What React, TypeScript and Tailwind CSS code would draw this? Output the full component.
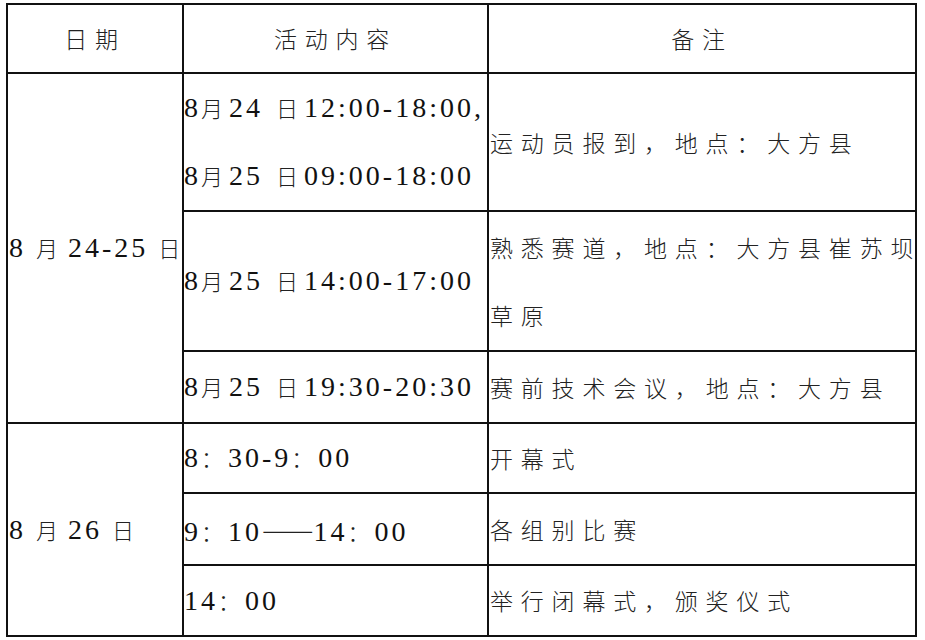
import React from "react";

type Variant = "time" | "note" | "date" | "head";

const cls: Record<Variant, Record<string, string>> = {
  time: {
    latin: "font-['Liberation_Serif'] text-[28px] tracking-[3px] [word-spacing:-10px] text-[#111]",
    yue: "font-['Noto_Sans_CJK_SC'] font-light text-[22px] tracking-[0px] text-[#222] ml-[0px] mr-[6px]",
    ri: "font-['Noto_Sans_CJK_SC'] font-light text-[22px] tracking-[0px] text-[#222] ml-[13px] mr-[6px]",
    han: "font-['Noto_Sans_CJK_SC'] font-light text-[22px] tracking-[0px] text-[#222]",
    punct: "font-['Noto_Sans_CJK_SC'] font-light text-[22px] tracking-[5px] text-[#222]",
    dash: "font-['Noto_Sans_CJK_SC'] font-light text-[31px] tracking-[0px] text-[#222]",
  },
  date: {
    latin: "font-['Liberation_Serif'] text-[28px] tracking-[3px] text-[#111]",
    yue: "font-['Noto_Sans_CJK_SC'] font-light text-[22px] tracking-[0px] text-[#222]",
    ri: "font-['Noto_Sans_CJK_SC'] font-light text-[22px] tracking-[0px] text-[#222]",
    han: "font-['Noto_Sans_CJK_SC'] font-light text-[22px] tracking-[0px] text-[#222]",
    punct: "font-['Noto_Sans_CJK_SC'] font-light text-[22px] tracking-[0px] text-[#222]",
    dash: "font-['Noto_Sans_CJK_SC'] font-light text-[22px] tracking-[0px] text-[#222]",
  },
  note: {
    latin: "font-['Liberation_Serif'] text-[28px] tracking-[3px] text-[#111]",
    yue: "font-['Noto_Sans_CJK_SC'] font-light text-[23px] tracking-[7.8px] text-[#222]",
    ri: "font-['Noto_Sans_CJK_SC'] font-light text-[23px] tracking-[7.8px] text-[#222]",
    han: "font-['Noto_Sans_CJK_SC'] font-light text-[23px] tracking-[7.8px] text-[#222]",
    punct: "font-['Noto_Sans_CJK_SC'] font-light text-[23px] tracking-[7.8px] text-[#222]",
    dash: "font-['Noto_Sans_CJK_SC'] font-light text-[23px] tracking-[7.8px] text-[#222]",
  },
  head: {
    latin: "font-['Liberation_Serif'] text-[28px] tracking-[3px] text-[#111]",
    yue: "font-['Noto_Sans_CJK_SC'] font-light text-[23px] tracking-[7.8px] text-[#222]",
    ri: "font-['Noto_Sans_CJK_SC'] font-light text-[23px] tracking-[7.8px] text-[#222]",
    han: "font-['Noto_Sans_CJK_SC'] font-light text-[23px] tracking-[7.8px] text-[#222]",
    punct: "font-['Noto_Sans_CJK_SC'] font-light text-[23px] tracking-[7.8px] text-[#222]",
    dash: "font-['Noto_Sans_CJK_SC'] font-light text-[23px] tracking-[7.8px] text-[#222]",
  },
};

function kind(ch: string): string {
  const c = ch.charCodeAt(0);
  if (c === 0x2014) return "dash";
  if ((c >= 0x3000 && c <= 0x303f) || (c >= 0xff00 && c <= 0xffef)) return "punct";
  if (ch === "月") return "yue";
  if (ch === "日") return "ri";
  if (c >= 0x4e00 && c <= 0x9fff) return "han";
  return "latin";
}

function Mixed({ text, v }: { text: string; v: Variant }) {
  const out: { k: string; s: string }[] = [];
  for (const ch of text) {
    const k = kind(ch);
    const last = out[out.length - 1];
    if (last && last.k === k && k !== "yue" && k !== "ri") last.s += ch;
    else out.push({ k, s: ch });
  }
  return (
    <span className="whitespace-pre">
      {out.map((r, i) => (
        <span key={i} className={cls[v][r.k]}>
          {r.s}
        </span>
      ))}
    </span>
  );
}

function Lines({ lines, v }: { lines: string[]; v: Variant }) {
  return (
    <div className="flex flex-col">
      {lines.map((l, i) => (
        <div key={i} className="h-[68px] flex items-center whitespace-nowrap">
          <Mixed text={l} v={v} />
        </div>
      ))}
    </div>
  );
}

const td = "border-2 border-[#111] p-0 align-middle font-['Liberation_Serif','Noto_Sans_CJK_SC',serif]";

export default function App() {
  return (
    <div className="w-[925px] h-[640px] bg-white overflow-hidden pl-[6px] pt-[3px]">
      <table className="border-collapse table-fixed w-[909px]">
        <colgroup>
          <col className="w-[176px]" />
          <col className="w-[305px]" />
          <col className="w-[428px]" />
        </colgroup>
        <tbody>
          <tr className="h-[69px]">
            <td className={`${td} text-center`}>
              <Mixed text="日期" v="head" />
            </td>
            <td className={`${td} text-center`}>
              <Mixed text="活动内容" v="head" />
            </td>
            <td className={`${td} text-center`}>
              <Mixed text="备注" v="head" />
            </td>
          </tr>
          <tr className="h-[137px]">
            <td rowSpan={3} className={`${td} pl-[1px]`}>
              <Lines lines={["8 月 24-25 日"]} v="date" />
            </td>
            <td className={td}>
              <Lines lines={["8 月 24 日 12:00-18:00,", "8 月 25 日 09:00-18:00"]} v="time" />
            </td>
            <td className={`${td} pl-[1px]`}>
              <Lines lines={["运动员报到，地点：大方县"]} v="note" />
            </td>
          </tr>
          <tr className="h-[140px]">
            <td className={td}>
              <Lines lines={["8 月 25 日 14:00-17:00"]} v="time" />
            </td>
            <td className={`${td} pl-[1px]`}>
              <Lines lines={["熟悉赛道，地点：大方县崔苏坝", "草原"]} v="note" />
            </td>
          </tr>
          <tr className="h-[72px]">
            <td className={td}>
              <Lines lines={["8 月 25 日 19:30-20:30"]} v="time" />
            </td>
            <td className={`${td} pl-[1px]`}>
              <Lines lines={["赛前技术会议，地点：大方县"]} v="note" />
            </td>
          </tr>
          <tr className="h-[70px]">
            <td rowSpan={3} className={`${td} pl-[1px]`}>
              <Lines lines={["8 月 26 日"]} v="date" />
            </td>
            <td className={td}>
              <Lines lines={["8：30-9：00"]} v="time" />
            </td>
            <td className={`${td} pl-[1px]`}>
              <Lines lines={["开幕式"]} v="note" />
            </td>
          </tr>
          <tr className="h-[72px]">
            <td className={td}>
              <Lines lines={["9：10——14：00"]} v="time" />
            </td>
            <td className={`${td} pl-[1px]`}>
              <Lines lines={["各组别比赛"]} v="note" />
            </td>
          </tr>
          <tr className="h-[71px]">
            <td className={td}>
              <Lines lines={["14：00"]} v="time" />
            </td>
            <td className={`${td} pl-[1px]`}>
              <Lines lines={["举行闭幕式，颁奖仪式"]} v="note" />
            </td>
          </tr>
        </tbody>
      </table>
    </div>
  );
}
